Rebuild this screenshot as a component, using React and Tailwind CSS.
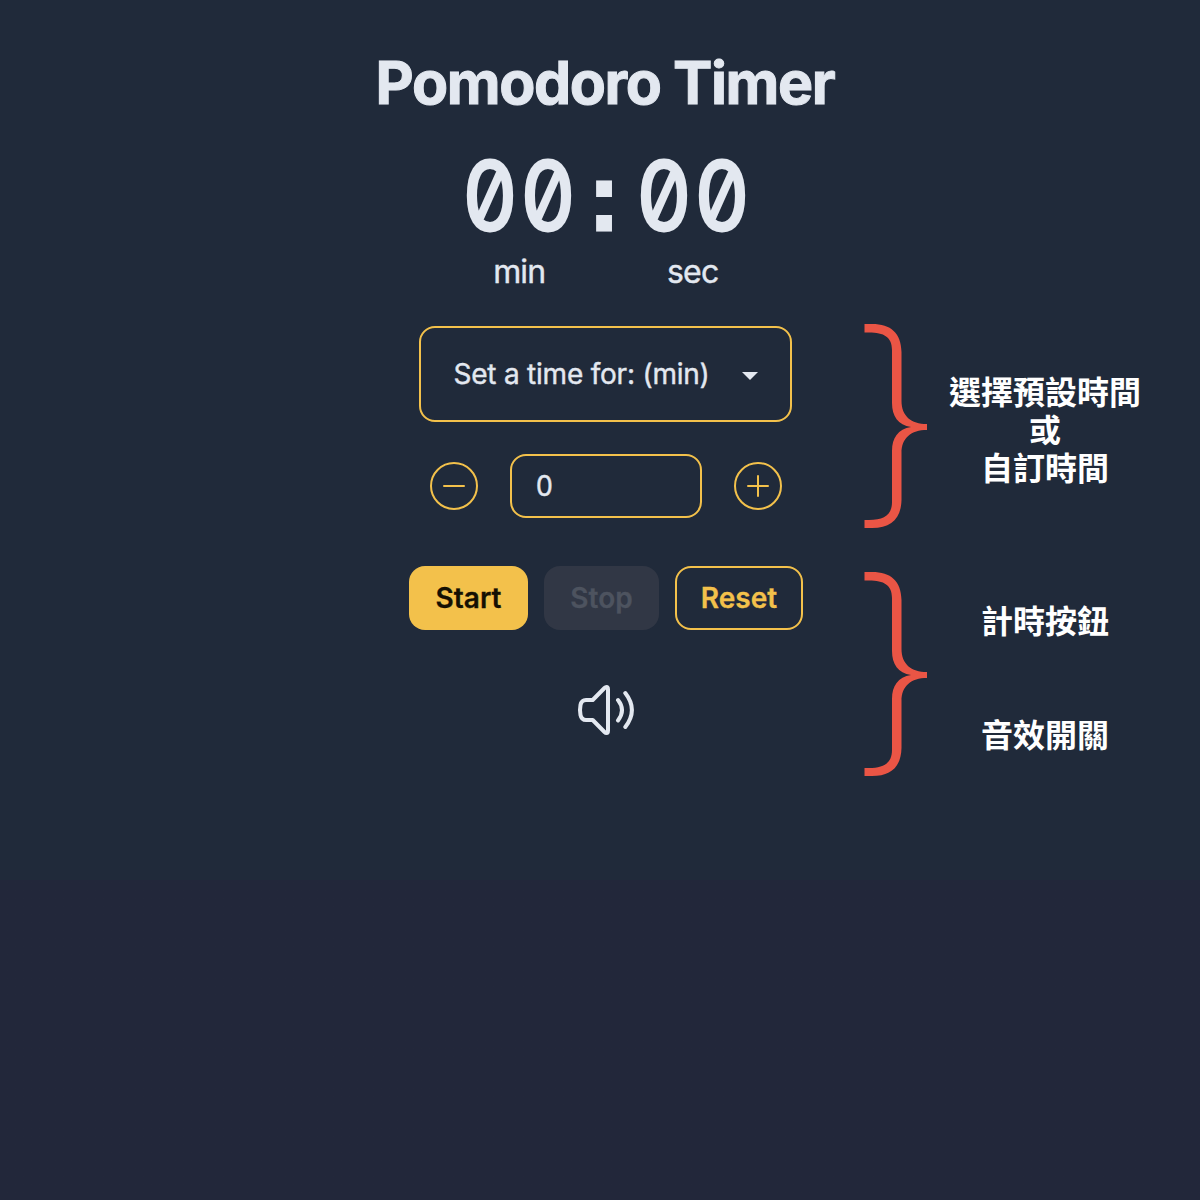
const sans = "font-['Inter','Noto_Sans_CJK_TC',sans-serif]";

function Digit({ children }) {
  return (
    <span className="flex w-[57.8px] justify-center">
      <span className="scale-x-[0.9]">{children}</span>
    </span>
  );
}

function Unit({ label }) {
  return (
    <div className="flex w-[115.6px] flex-col items-center">
      <div className="flex h-24 w-full text-[95px] leading-[96px] font-normal [font-feature-settings:'zero'] [-webkit-text-stroke:2.8px]">
        <Digit>0</Digit>
        <Digit>0</Digit>
      </div>
      <span className="mt-2 text-[32px] leading-10 tracking-[-0.8px] [-webkit-text-stroke:0.4px]">{label}</span>
    </div>
  );
}

function Brace() {
  return (
    <svg className="h-[204px] w-16 shrink-0" viewBox="0 0 64 204" fill="#ea5545">
      <path d="M0.500 0H8C27 0 37 9 37.500 28V77C37.500 92 47 100 63 100V106C47 106 37.500 114 37.500 129V176C37 195 27 204 8 204H0.500V196H5C20 196 28 191 28 178V127C28 114 34 105 47 103C34 101 28 92 28 79V26C28 13 20 8.500 5 8.500H0.500Z" />
    </svg>
  );
}

function RoundButton({ plus }) {
  return (
    <button className="flex size-12 items-center justify-center rounded-full border-2 border-[#f3c14b]">
      <svg className="size-8" viewBox="0 0 32 32" stroke="#f3c14b" strokeWidth="2" strokeLinecap="round">
        <path d="M6 16H26" />
        {plus && <path d="M16 6V26" />}
      </svg>
    </button>
  );
}

export default function App() {
  return (
    <div className={`flex h-[1200px] w-[1200px] bg-linear-to-b from-[#202a3a] from-[880px] to-[#22273a] to-[880px] text-[#e3e8f0] ${sans}`}>
      <main className="ml-[366px] flex w-[480px] shrink-0 flex-col items-center pt-[53px]">
        <h1 className="mr-0.5 text-[59px] leading-[60px] font-bold tracking-[-1.4px] whitespace-nowrap [-webkit-text-stroke:1px]">Pomodoro Timer</h1>
        <div className="mt-[35px] flex h-[146px]">
          <Unit label="min" />
          <div className="flex h-24 w-[57.8px] justify-center pr-1 font-['Liberation_Mono',monospace] text-[91px] leading-[116px] font-bold [-webkit-text-stroke:3px]">:</div>
          <Unit label="sec" />
        </div>
        <button className="mt-8 mr-0.5 flex h-24 w-[373px] items-center rounded-2xl border-2 border-[#f3c14b] pl-[33px] text-[28px]">
          <span className="w-[256px] text-left tracking-[-0.22px] whitespace-nowrap [-webkit-text-stroke:0.4px]">Set a time for: (min)</span>
          <svg className="mt-1 ml-8 h-2 w-4" viewBox="0 0 16 8" fill="currentColor"><path d="M0 0H16L8 8Z" /></svg>
        </button>
        <div className="mt-8 flex items-center gap-8">
          <RoundButton />
          <div className="flex h-16 w-48 items-center rounded-2xl border-2 border-[#f3c14b] pl-6 text-[28px]">
            <span className="origin-left scale-x-95 [-webkit-text-stroke:0.5px]">0</span>
          </div>
          <RoundButton plus />
        </div>
        <div className="mt-12 flex gap-4 text-[28px] font-semibold">
          <button className="h-16 w-[119px] rounded-2xl bg-[#f3c14b] text-[#151003] [-webkit-text-stroke:0.3px]">Start</button>
          <button className="h-16 w-[115px] rounded-2xl bg-[#313745] text-[#4d535f] [-webkit-text-stroke:0.3px]">Stop</button>
          <button className="h-16 w-32 rounded-2xl border-2 border-[#f3c14b] text-[#f3c14b] [-webkit-text-stroke:0.3px]">Reset</button>
        </div>
        <svg className="mt-12 size-16" viewBox="0 0 64 64" fill="none" stroke="currentColor" strokeWidth="4" strokeLinecap="round" strokeLinejoin="round">
          <path d="M18.700 22H12Q7.500 22 6.500 27Q5.500 32 6.500 37Q7.500 42 12 42H18.700L30.500 54Q31.500 55 32.500 55Q34 55 34 52.500V11.500Q34 9 32.500 9Q31.500 9 30.500 10Z" />
          <path d="M44 22Q52 32 44 42.500M51.300 15Q64.500 32 51.300 49" />
        </svg>
      </main>
      <aside className="ml-[18px] flex flex-col pt-[324.4px] text-[32px] leading-[38px] font-bold text-white">
        <section className="flex h-[248px]">
          <Brace />
          <div className="mt-[50px] ml-[21px] w-48 text-center">選擇預設時間<br />或<br />自訂時間</div>
        </section>
        <section className="flex">
          <Brace />
          <div className="mt-[31px] ml-[21px] flex w-48 flex-col gap-[76px] text-center">
            <p>計時按鈕</p>
            <p>音效開關</p>
          </div>
        </section>
      </aside>
    </div>
  );
}
